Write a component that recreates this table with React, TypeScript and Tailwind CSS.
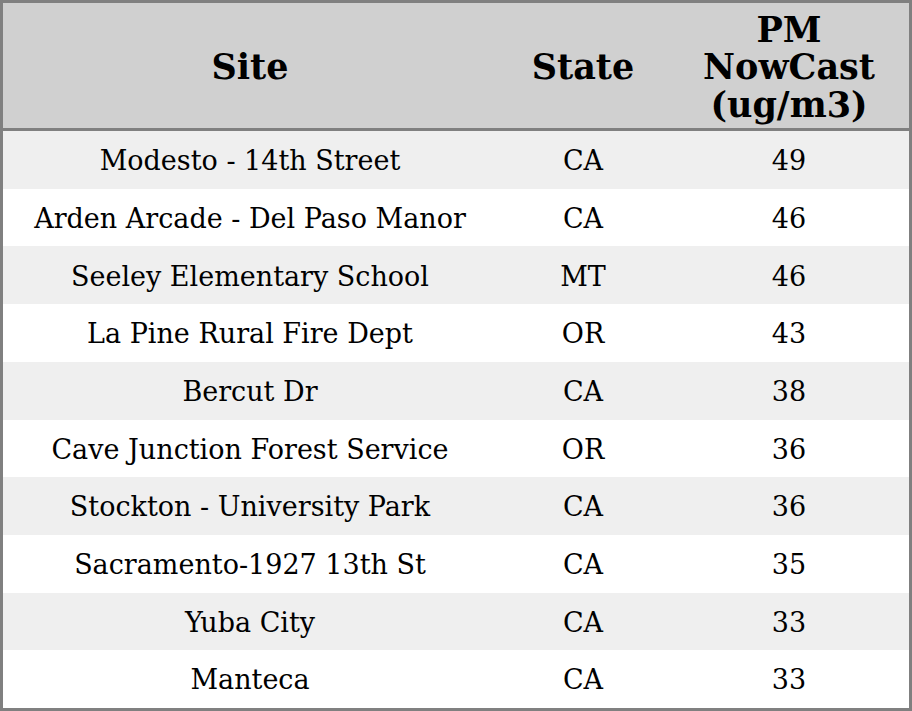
import React from "react";

const rows: [string, string, string][] = [
  ["Modesto - 14th Street", "CA", "49"],
  ["Arden Arcade - Del Paso Manor", "CA", "46"],
  ["Seeley Elementary School", "MT", "46"],
  ["La Pine Rural Fire Dept", "OR", "43"],
  ["Bercut Dr", "CA", "38"],
  ["Cave Junction Forest Service", "OR", "36"],
  ["Stockton - University Park", "CA", "36"],
  ["Sacramento-1927 13th St", "CA", "35"],
  ["Yuba City", "CA", "33"],
  ["Manteca", "CA", "33"],
];

const cols = "grid grid-cols-[494px_172px_1fr] items-center text-center";

export default function App() {
  return (
    <div
      className="w-[912px] h-[711px] bg-white border-[3px] border-[#808080] flex flex-col text-black"
      style={{ fontFamily: '"DejaVu Serif", serif' }}
    >
      <div className={cols + " h-[128px] shrink-0 pt-[3px] bg-[#d0d0d0] border-b-[3px] border-[#808080] text-[35px] font-bold"}>
        <div>Site</div>
        <div>State</div>
        <div className="leading-[37.5px]">
          PM
          <br />
          NowCast
          <br />
          (ug/m3)
        </div>
      </div>
      {rows.map((r, i) => (
        <div
          key={i}
          className={cols + " flex-1 pt-[3px] text-[27px] " + (i % 2 === 0 ? "bg-[#efefef]" : "bg-white")}
        >
          <div>{r[0]}</div>
          <div>{r[1]}</div>
          <div>{r[2]}</div>
        </div>
      ))}
    </div>
  );
}
